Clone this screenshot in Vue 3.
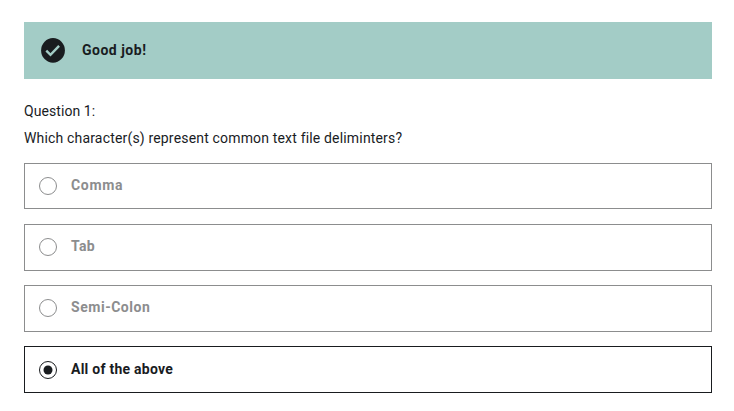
<script setup>
import { ref } from 'vue'

const selected = ref('all')
const options = [
  { id: 'comma', label: 'Comma' },
  { id: 'tab', label: 'Tab' },
  { id: 'semi', label: 'Semi-Colon' },
  { id: 'all', label: 'All of the above' },
]
</script>

<template>
  <main class="quiz">
    <div class="banner" role="status">
      <svg class="check" viewBox="0 0 24 25" aria-hidden="true">
        <ellipse cx="12" cy="12.4" rx="11.9" ry="12.3" fill="#191c1f" />
        <path d="M5.3 12.6l4.2 4.2 8.6-8.9" fill="none" stroke="#a3ccc6" stroke-width="2.4" />
      </svg>
      <strong class="banner-text">Good job!</strong>
    </div>
    <p class="number">Question 1:</p>
    <p class="question">Which character(s) represent common text file deliminters?</p>
    <div class="options" role="radiogroup">
      <div
        v-for="option in options"
        :key="option.id"
        class="option"
        :class="[option.id, { selected: option.id === selected }]"
        role="radio"
        :aria-checked="option.id === selected"
      >
        <svg class="radio" viewBox="0 0 18 18" aria-hidden="true">
          <circle cx="9" cy="9" r="8.5" fill="none" stroke="currentColor" />
          <circle v-if="option.id === selected" cx="9" cy="9" r="4.5" fill="currentColor" />
        </svg>
        <span class="label">{{ option.label }}</span>
      </div>
    </div>
  </main>
</template>

<style>
body {
  background: #fff;
}
</style>

<style scoped>
.quiz {
  box-sizing: border-box;
  width: 734px;
  height: 411px;
  padding: 22px 22px 0 24px;
  font-family: Roboto, "Liberation Sans", sans-serif;
  font-size: 14px;
  line-height: 20px;
  color: #191c1f;
}
.banner {
  box-sizing: border-box;
  display: flex;
  align-items: center;
  height: 57px;
  padding-left: 17px;
  background: #a3ccc6;
}
.check {
  width: 24px;
  height: 25px;
}
.banner-text {
  margin: 0 0 1px 17px;
  font-weight: 700;
  letter-spacing: 0.5px;
}
p {
  margin: 0;
  white-space: nowrap;
}
.number {
  margin-top: 22px;
  letter-spacing: 0.07px;
}
.question {
  margin-top: 7px;
  letter-spacing: 0.17px;
}
.options {
  display: flex;
  flex-direction: column;
  gap: 14px;
  margin-top: 15px;
}
.option {
  box-sizing: border-box;
  display: flex;
  align-items: flex-start;
  height: 47px;
  padding: 13px 0 0 14px;
  border: 1px solid #8c8d8e;
  color: #8c8d8e;
  letter-spacing: 0.25px;
}
.option.comma {
  height: 46px;
  margin-bottom: 1px;
  letter-spacing: 0.7px;
}
.option.semi {
  letter-spacing: 0.53px;
}
.option.selected {
  padding-top: 14px;
  border-color: #191c1f;
  color: #191c1f;
}
.radio {
  width: 18px;
  height: 18px;
}
.label {
  margin: -2px 0 0 14px;
  font-weight: 700;
  white-space: nowrap;
}
</style>
